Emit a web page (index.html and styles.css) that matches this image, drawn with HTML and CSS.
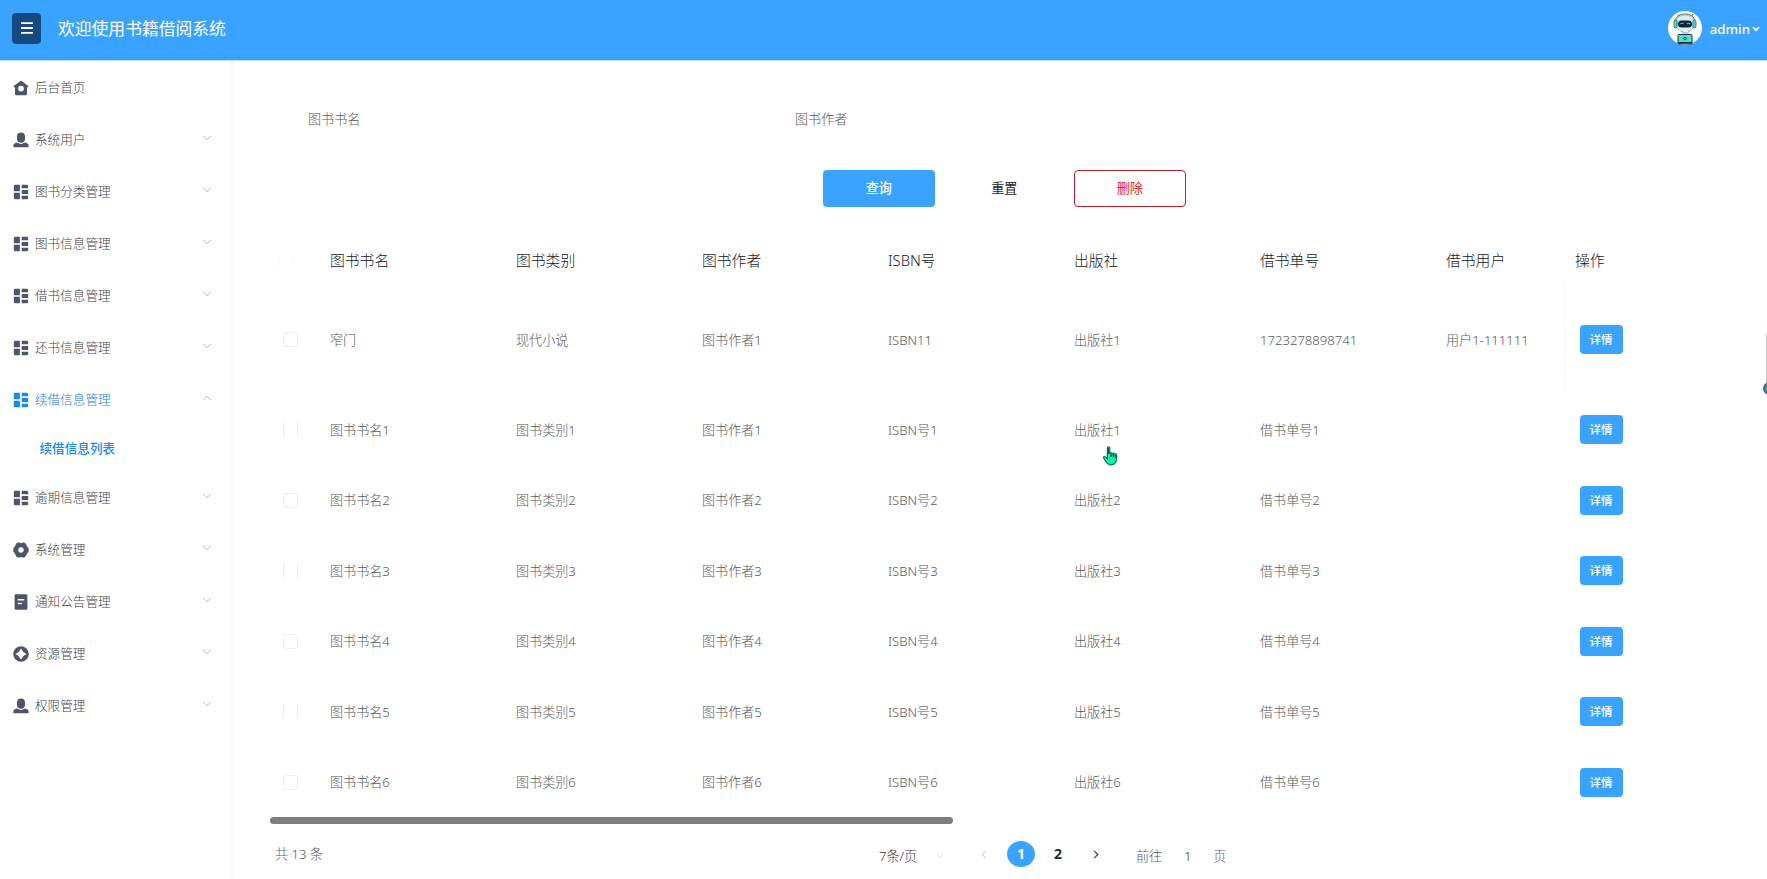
FILE: index.html
```html
<!DOCTYPE html>
<html lang="zh-CN">
<head>
    <meta charset="UTF-8">
    <meta name="viewport" content="width=device-width, initial-scale=1.0">
    <title>书籍借阅系统</title>
    <link rel="stylesheet" href="styles.css">
</head>
<body>
    <svg class="sprite">
        <symbol id="home" viewBox="0 0 16 16"><path fill-rule="evenodd" d="M8 .4 15.6 6.3 14.7 7.6 14 7.2V14q0 1.3-1.3 1.3H3.3Q2 15.300 2 14V7.200L1.300 7.600.4 6.300ZM8 5.700a2.900 2.900 0 1 0 0 5.800 2.900 2.900 0 0 0 0-5.800Z"/></symbol>
        <symbol id="user" viewBox="0 0 16 16"><path d="M8 .5C5.500.500 4 2 4 4.300v2.600C4 9 5.600 10.700 8 10.700S12 9 12 6.900V4.300C12 2 10.500.5 8 .5ZM4 10.600Q.3 11.500.3 14v.500q0 .8.8.8h13.800q.8 0 .8-.8V14q0-2.500-3.700-3.400L8 12.200Z"/></symbol>
        <symbol id="menu" viewBox="0 0 16 16"><path d="M2.300.8h4.600v6.400H.8v-5Q.8.8 2.300.8ZM.8 8.800h6.100v6.400H2.300Q.8 15.200.8 13.700ZM8.700.8h5q1.500 0 1.500 1.500v2H8.700ZM8.700 6.100h6.500v3.800H8.700ZM8.700 11.700h6.500v2q0 1.500-1.500 1.500h-5Z"/></symbol>
        <symbol id="gear" viewBox="0 0 16 16"><path fill-rule="evenodd" d="M5 .5h1.200Q8 1.500 9.800.5H11q1.700.6 2.400 2.200.2 1.900 2.200 3.300v4q-2 1.400-2.200 3.300-.7 1.600-2.400 2.200H9.800Q8 14.500 6.200 15.500H5q-1.700-.6-2.400-2.200Q2.400 11.400.4 10V6q2-1.400 2.200-3.300Q3.300 1.100 5 .5ZM8 5.300a2.700 2.700 0 1 0 0 5.400 2.700 2.700 0 0 0 0-5.400Z"/></symbol>
        <symbol id="note" viewBox="0 0 16 16"><path fill-rule="evenodd" d="M2.800.3h10.400q1.200 0 1.200 1.200v13q0 1.200-1.200 1.200H2.800q-1.200 0-1.200-1.200v-13Q1.600.3 2.800.3ZM4.700 4.900v1.500h6.600V4.900ZM4.700 8.700v1.500h4.200V8.700Z"/></symbol>
        <symbol id="compass" viewBox="0 0 16 16"><path fill-rule="evenodd" d="M8 .2a7.800 7.800 0 1 0 0 15.600A7.800 7.800 0 0 0 8 .2ZM8 2.400Q9.600 6.400 13.600 8 9.600 9.600 8 13.600 6.400 9.600 2.400 8 6.400 6.400 8 2.400Z"/></symbol>
        <symbol id="down" viewBox="0 0 10 6"><path d="M1 .8 5 4.700 9 .8"/></symbol>
    </svg>

    <div class="header">
        <div class="toggle">
            <svg viewBox="0 0 12 12"><path d="M0 1.200h12M0 6h12M0 10.800h12"/></svg>
        </div>
        <div class="title">欢迎使用书籍借阅系统</div>
        <div class="account">
            <svg class="avatar" viewBox="0 0 34 34">
                <circle cx="17" cy="17" r="17" fill="#fff"/>
                <path d="M9.500 3.500l1.500 2M25 3l-1.500 2M7 10q2-7 10-7T27 10" fill="none" stroke="#4c6875" stroke-width="1"/>
                <ellipse cx="17" cy="12.500" rx="9.500" ry="8.500" fill="#d8eff3" stroke="#8cabb5" stroke-width=".7"/>
                <rect x="6" y="9" width="3.200" height="8" rx="1.500" fill="#50d4d0" stroke="#154050" stroke-width=".6"/>
                <rect x="24.800" y="9" width="3.200" height="8" rx="1.500" fill="#50d4d0" stroke="#154050" stroke-width=".6"/>
                <rect x="10" y="9.500" width="14" height="7" rx="3.500" fill="#10263e"/>
                <path d="M12.500 13q1.500-1.500 3 0M19 13q1.500-1.500 3 0" fill="none" stroke="#5ab9e0" stroke-width="1.100"/>
                <path d="M14 20l1 2h5l1-2" fill="#e8f7f9" stroke="#66818c" stroke-width=".7"/>
                <rect x="10" y="23.500" width="14" height="9.500" rx="1" fill="#56ddd2" stroke="#103746" stroke-width="1"/>
                <path d="M10 31.800h14" stroke="#103746" stroke-width="1.600"/>
                <circle cx="17" cy="27.500" r="1.300" fill="none" stroke="#103746" stroke-width=".9"/>
            </svg>
            <span>admin</span>
            <svg class="caret" viewBox="0 0 8 6"><path d="M1 1.200 4 4.200 7 1.200"/></svg>
        </div>
    </div>

    <div class="container">
        <div class="sidebar">
            <div class="item"><svg class="icon"><use href="#home"/></svg>后台首页</div>
            <div class="item"><svg class="icon"><use href="#user"/></svg>系统用户<svg class="arrow"><use href="#down"/></svg></div>
            <div class="item"><svg class="icon"><use href="#menu"/></svg>图书分类管理<svg class="arrow"><use href="#down"/></svg></div>
            <div class="item"><svg class="icon"><use href="#menu"/></svg>图书信息管理<svg class="arrow"><use href="#down"/></svg></div>
            <div class="item"><svg class="icon"><use href="#menu"/></svg>借书信息管理<svg class="arrow"><use href="#down"/></svg></div>
            <div class="item"><svg class="icon"><use href="#menu"/></svg>还书信息管理<svg class="arrow"><use href="#down"/></svg></div>
            <div class="item active"><svg class="icon"><use href="#menu"/></svg>续借信息管理<svg class="arrow up"><use href="#down"/></svg></div>
            <div class="subitem">续借信息列表</div>
            <div class="item"><svg class="icon"><use href="#menu"/></svg>逾期信息管理<svg class="arrow"><use href="#down"/></svg></div>
            <div class="item"><svg class="icon"><use href="#gear"/></svg>系统管理<svg class="arrow"><use href="#down"/></svg></div>
            <div class="item"><svg class="icon"><use href="#note"/></svg>通知公告管理<svg class="arrow"><use href="#down"/></svg></div>
            <div class="item"><svg class="icon"><use href="#compass"/></svg>资源管理<svg class="arrow"><use href="#down"/></svg></div>
            <div class="item"><svg class="icon"><use href="#user"/></svg>权限管理<svg class="arrow"><use href="#down"/></svg></div>
        </div>

        <div class="main">
            <div class="search">
                <div class="field">图书书名</div>
                <div class="field">图书作者</div>
            </div>
            <div class="buttons">
                <div class="btn primary">查询</div>
                <div class="btn">重置</div>
                <div class="btn danger">删除</div>
            </div>

            <div class="table">
                <div class="row head">
                    <div class="check none"></div><div>图书书名</div><div>图书类别</div><div>图书作者</div><div>ISBN号</div><div>出版社</div><div>借书单号</div><div>借书用户</div><div class="action">操作</div>
                </div>
                <div class="row first">
                    <div class="check"></div><div>窄门</div><div>现代小说</div><div>图书作者1</div><div>ISBN11</div><div>出版社1</div><div>1723278898741</div><div>用户1-111111</div><div class="action"><span class="detail">详情</span></div>
                </div>
                <div class="row">
                    <div class="check open"></div><div>图书书名1</div><div>图书类别1</div><div>图书作者1</div><div>ISBN号1</div><div>出版社1</div><div>借书单号1</div><div></div><div class="action"><span class="detail">详情</span></div>
                </div>
                <div class="row">
                    <div class="check"></div><div>图书书名2</div><div>图书类别2</div><div>图书作者2</div><div>ISBN号2</div><div>出版社2</div><div>借书单号2</div><div></div><div class="action"><span class="detail">详情</span></div>
                </div>
                <div class="row">
                    <div class="check open"></div><div>图书书名3</div><div>图书类别3</div><div>图书作者3</div><div>ISBN号3</div><div>出版社3</div><div>借书单号3</div><div></div><div class="action"><span class="detail">详情</span></div>
                </div>
                <div class="row">
                    <div class="check"></div><div>图书书名4</div><div>图书类别4</div><div>图书作者4</div><div>ISBN号4</div><div>出版社4</div><div>借书单号4</div><div></div><div class="action"><span class="detail">详情</span></div>
                </div>
                <div class="row">
                    <div class="check open"></div><div>图书书名5</div><div>图书类别5</div><div>图书作者5</div><div>ISBN号5</div><div>出版社5</div><div>借书单号5</div><div></div><div class="action"><span class="detail">详情</span></div>
                </div>
                <div class="row">
                    <div class="check"></div><div>图书书名6</div><div>图书类别6</div><div>图书作者6</div><div>ISBN号6</div><div>出版社6</div><div>借书单号6</div><div></div><div class="action"><span class="detail">详情</span></div>
                </div>
            </div>
            <div class="scrollbar"></div>

            <div class="pagination">
                <div class="total">共 13 条</div>
                <div class="size">7条/页<svg class="arrow"><use href="#down"/></svg></div>
                <svg class="prev" viewBox="0 0 6 10"><path d="M5 1 1 5l4 4"/></svg>
                <div class="page current">1</div>
                <div class="page">2</div>
                <svg class="next" viewBox="0 0 6 10"><path d="M1 1l4 4-4 4"/></svg>
                <div class="jump">前往<span>1</span>页</div>
            </div>
        </div>
    </div>

    <div class="drag-line"></div>
    <div class="drag-dot"></div>
    <svg class="cursor" viewBox="0 0 17 20">
        <path d="M5.500 1.500Q6.800.3 7.800 1.700V7q1.200-.8 2 .3 1.400-.7 2.200.5 1.600-.4 2.500.9.900 5.300-1.300 8.300-2 2.200-5.700 1.700Q5 18.200 1.600 12q-.6-1.700 1-1.500l2.700 2Z" fill="#10f0a8" stroke="#147357" stroke-width="1.200"/>
        <path d="M6.300 2v6M9 7.500v3.500M11.300 8v3M13.500 9v3" fill="none" stroke="#06543c" stroke-width="1.400"/>
    </svg>
</body>
</html>
```
FILE: styles.css
```css
* {
    box-sizing: border-box;
}
body {
    margin: 0;
    height: 879px;
    overflow: hidden;
    background-color: #fff;
    color: #565a61;
    font-family: "Noto Sans", "Noto Sans CJK SC", sans-serif;
    font-size: 13.1px;
    font-weight: 300;
    line-height: 20px;
}
.sprite {
    display: none;
}
svg {
    flex-shrink: 0;
}
.header {
    display: flex;
    align-items: center;
    height: 60px;
    padding: 0 7px 4px 12px;
    background-color: #3aa3ff;
    color: #fff;
}
.toggle {
    display: flex;
    align-items: center;
    justify-content: center;
    width: 29px;
    height: 31px;
    border-radius: 4px;
    background-color: #144a80;
}
.toggle svg {
    width: 12px;
    height: 12px;
    stroke: #fff;
    stroke-width: 1.8;
}
.title {
    margin-left: 17px;
    padding-top: 1px;
    font-size: 16.8px;
    font-weight: 400;
}
.account {
    display: flex;
    align-items: center;
    margin-left: auto;
    font-size: 13.3px;
    font-weight: 500;
}
.account span {
    padding-top: 1px;
}
.avatar {
    width: 34px;
    height: 34px;
    margin-right: 8px;
}
.caret {
    width: 8px;
    height: 6px;
    margin-left: 2px;
    margin-top: 2px;
    fill: none;
    stroke: #fff;
    stroke-width: 1.8;
}
.container {
    display: flex;
    height: 819px;
    border-top: 1px solid #b9e2fa;
}
.sidebar {
    width: 233px;
    flex-shrink: 0;
    border-right: 2px solid #f6f8fc;
}
.item {
    display: flex;
    align-items: center;
    height: 52px;
    padding: 1px 19px 0 13px;
    color: #3f4247;
    font-size: 12.6px;
}
.icon {
    width: 16px;
    height: 16px;
    margin-right: 6px;
    fill: #4e556b;
}
.arrow {
    width: 10px;
    height: 6px;
    margin-left: auto;
    margin-bottom: 3px;
    fill: none;
    stroke: #b4babd;
}
.up {
    transform: rotate(180deg);
}
.active {
    color: #1a7ce6;
}
.active .icon {
    fill: #1989fa;
}
.subitem {
    height: 46px;
    padding-left: 39.5px;
    color: #1989fa;
    font-size: 12.6px;
    font-weight: 500;
    line-height: 47px;
}
.main {
    flex: 1;
    padding: 48px 0 0 37px;
}
.search {
    display: flex;
    padding-left: 38px;
}
.field {
    width: 487px;
}
.buttons {
    display: flex;
    gap: 14px;
    margin-top: 41px;
    padding-left: 553px;
}
.btn {
    width: 111.5px;
    height: 37px;
    border-radius: 4px;
    color: #1f2230;
    font-weight: 400;
    line-height: 37px;
    text-align: center;
}
.primary {
    background-color: #3aa3ff;
    color: #fff;
    font-weight: 500;
}
.danger {
    border: 1px solid #bd2026;
    color: #f12a2f;
    line-height: 35px;
}
.table {
    margin-top: 28px;
}
.row {
    display: grid;
    grid-template-columns: 60px repeat(6, 186px) 118px 1fr;
    align-items: center;
    height: 70.5px;
}
.head {
    height: 50px;
    color: #16181e;
    font-size: 14.8px;
}
.first {
    height: 109.4px;
}
.check {
    width: 15px;
    height: 15px;
    margin-left: 13px;
    border: 1px solid #eeeff1;
    border-radius: 2px;
}
.open {
    border-color: transparent #eeeff1;
    border-radius: 0;
}
.none {
    margin-left: 9px;
    border-color: transparent #f8f8f9;
}
.action {
    display: flex;
    align-items: center;
    height: 100%;
    padding-left: 15.5px;
}
.head .action {
    padding-left: 11px;
}
.first .action {
    border-left: 1px solid #f3fafb;
    padding-left: 14.5px;
}
.detail {
    width: 43px;
    height: 29px;
    border-radius: 4px;
    background-color: #3aa3ff;
    color: #fff;
    font-size: 11.5px;
    font-weight: 500;
    line-height: 29px;
    text-align: center;
}
.scrollbar {
    width: 683px;
    height: 7px;
    border-radius: 4px;
    background-color: #7f7d80;
}
.pagination {
    display: flex;
    align-items: center;
    height: 60px;
    padding-left: 5px;
}
.total {
    width: 604px;
}
.size {
    display: flex;
    align-items: center;
    width: 65px;
    padding-top: 3px;
    color: #35383f;
}
.size .arrow {
    width: 8px;
    margin-bottom: 0;
    stroke: #d5d8dc;
}
.prev,
.next {
    width: 6px;
    height: 9px;
    fill: none;
    stroke: #45484f;
    stroke-width: 1.4;
}
.prev {
    margin: 0 20px 0 37px;
    stroke: #d5d8dc;
}
.page {
    width: 28px;
    height: 26px;
    border-radius: 50%;
    color: #25272c;
    font-size: 14px;
    font-weight: 700;
    line-height: 26px;
    text-align: center;
}
.page + .page {
    margin: 0 21px 0 9px;
}
.current {
    background-color: #3aa3ff;
    color: #fff;
}
.jump {
    display: flex;
    padding-top: 3px;
    margin-left: 37px;
}
.jump span {
    width: 51px;
    color: #35383f;
    text-align: center;
}
/* 悬浮在页面上方的元素 */
.cursor {
    position: absolute;
    left: 1102px;
    top: 446px;
    width: 17px;
    height: 20px;
}
.drag-line {
    position: absolute;
    right: 0;
    top: 333px;
    width: 1px;
    height: 50px;
    background-color: #c3d0d2;
}
.drag-dot {
    position: absolute;
    left: 1763px;
    top: 382px;
    width: 13px;
    height: 13px;
    border: 2px solid #4b6570;
    border-radius: 50%;
    background-color: #35a3b8;
}
```
